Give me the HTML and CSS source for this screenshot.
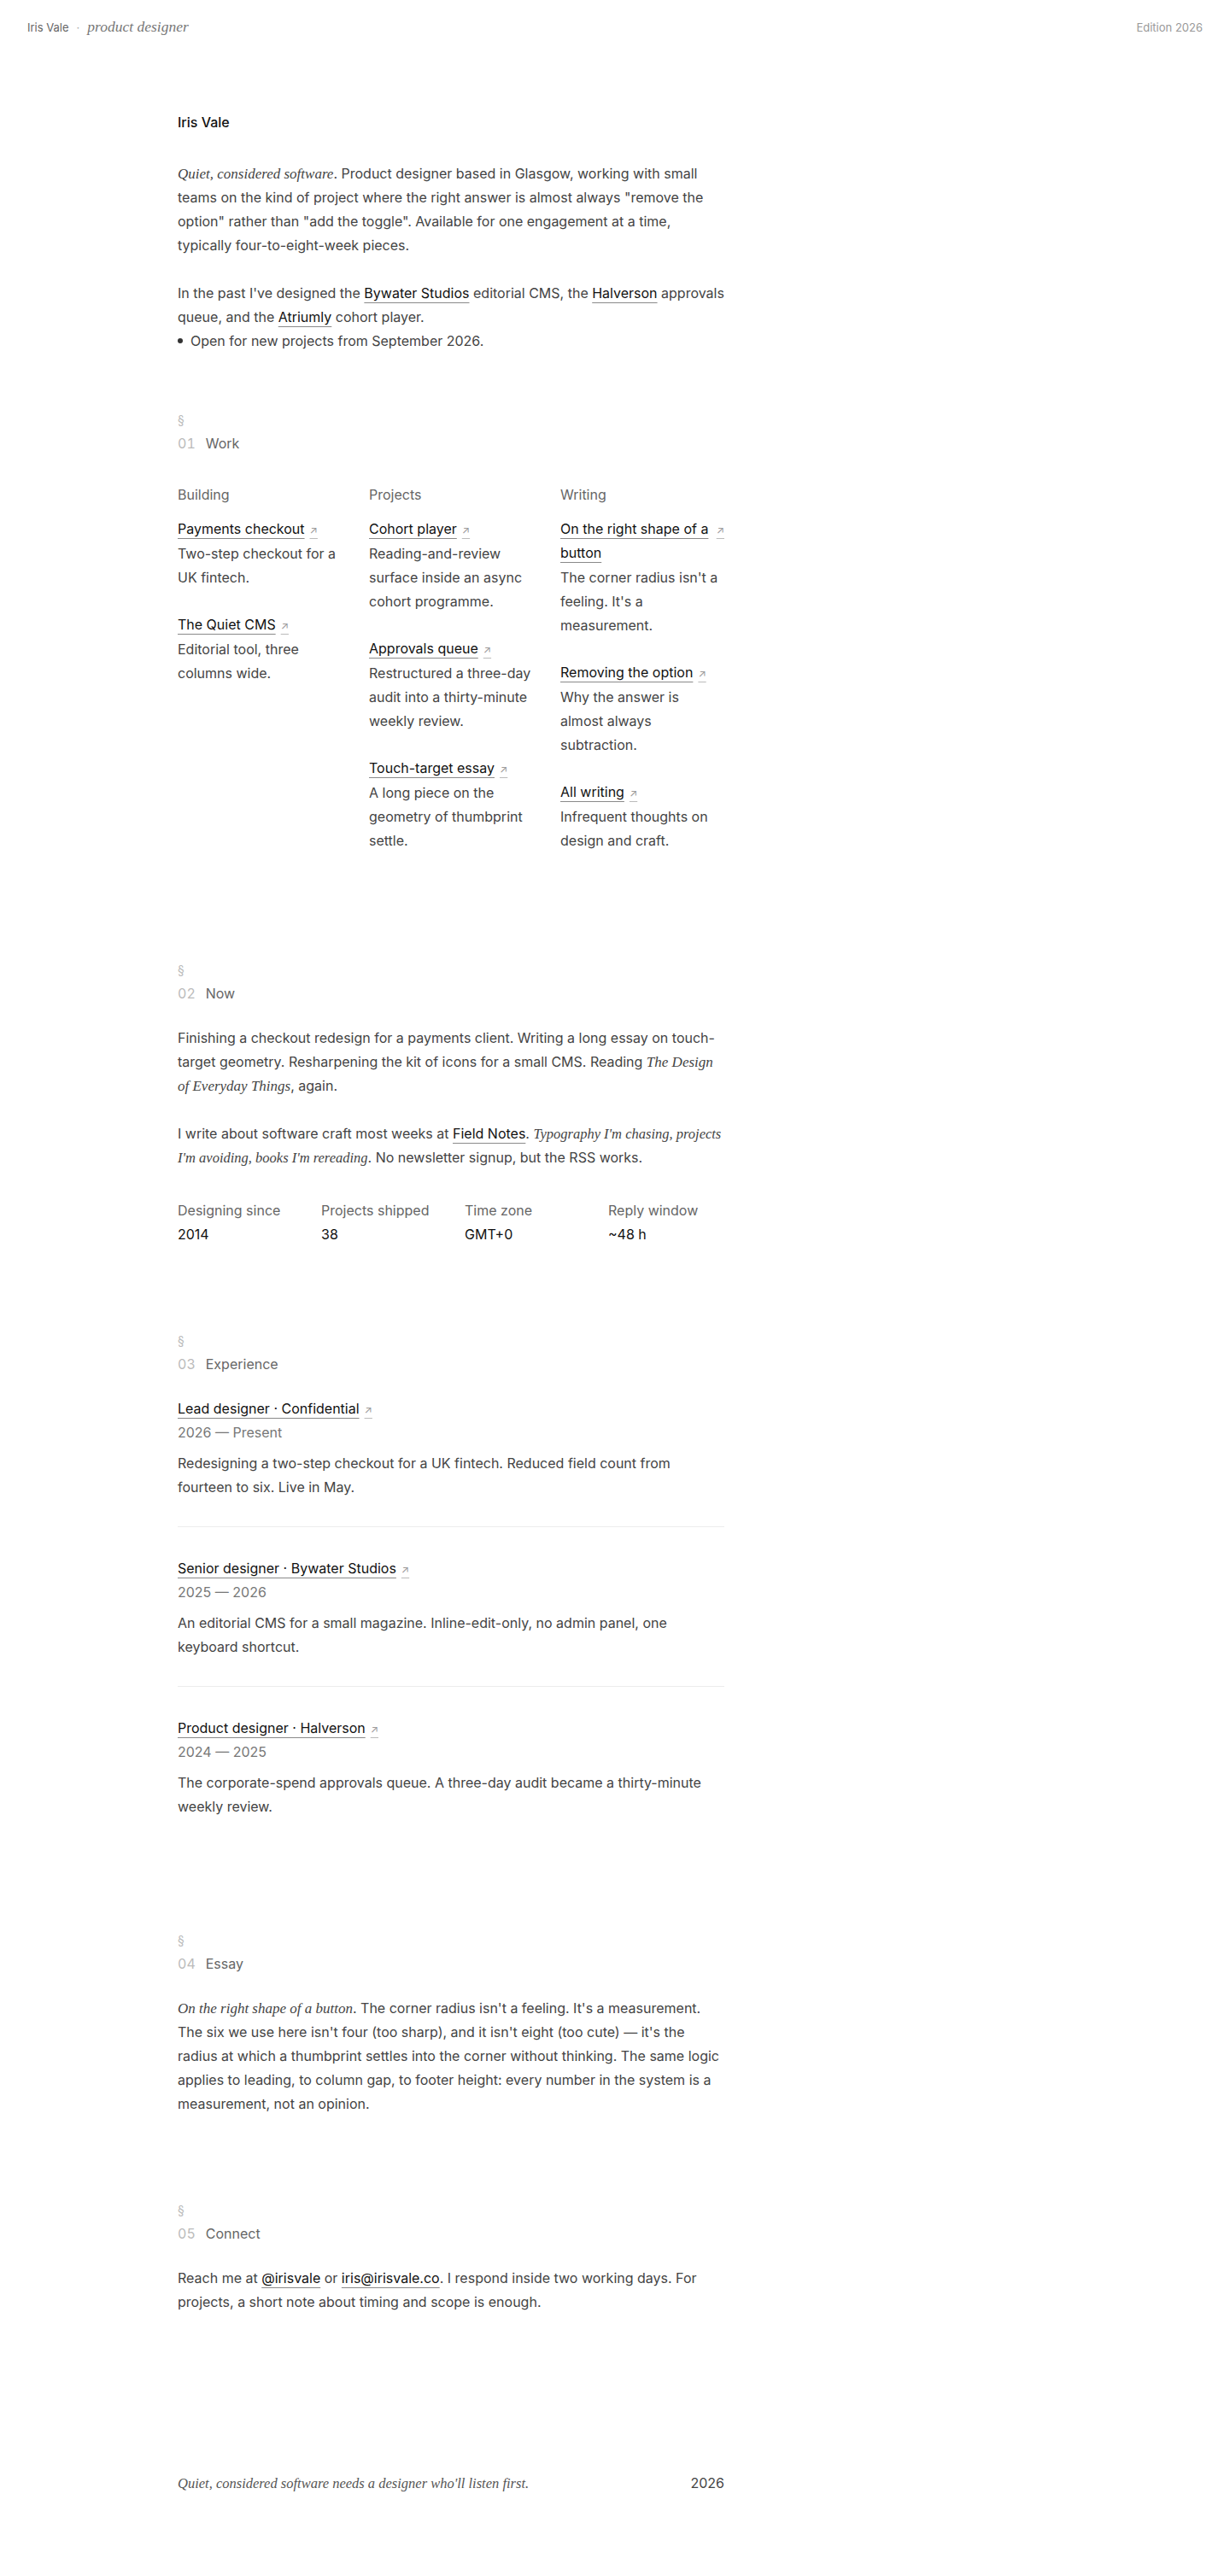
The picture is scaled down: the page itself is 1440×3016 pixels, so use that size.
FILE: index.html
```html
<!DOCTYPE html>
<html lang="en">
<head>
<meta charset="utf-8">
<title>Iris Vale · product designer</title>
<link rel="stylesheet" href="styles.css">
</head>
<body>
<header class="top">
  <div class="brand"><span class="brand-name">Iris Vale</span><span class="sep">·</span><em class="brand-role">product designer</em></div>
  <div class="edition">Edition 2026</div>
</header>

<main class="wrap">
  <div class="col">
    <section class="intro">
      <h1 class="name">Iris Vale</h1>
      <p class="para"><em class="s">Quiet, considered software</em>. Product designer based in Glasgow, working with small teams on the kind of project where the right answer is almost always "remove the option" rather than "add the toggle". Available for one engagement at a time, typically four-to-eight-week pieces.</p>
      <p class="para last">In the past I've designed the <a class="il" href="#">Bywater Studios</a> editorial CMS, the <a class="il" href="#">Halverson</a> approvals queue, and the <a class="il" href="#">Atriumly</a> cohort player.</p>
      <div class="status"><span class="dot"></span><span>Open for new projects from September 2026.</span></div>
    </section>

    <section class="sec first">
      <div class="sym">§</div>
      <h2 class="label"><span class="num">01</span><span>Work</span></h2>
      <div class="grid">
        <div class="wcol">
          <h3 class="wh">Building</h3>
          <div class="item">
            <a class="lk" href="#"><span class="lt">Payments checkout</span><span class="ar">↗</span></a>
            <p class="desc">Two-step checkout for a UK fintech.</p>
          </div>
          <div class="item">
            <a class="lk" href="#"><span class="lt">The Quiet CMS</span><span class="ar">↗</span></a>
            <p class="desc">Editorial tool, three columns wide.</p>
          </div>
        </div>
        <div class="wcol">
          <h3 class="wh">Projects</h3>
          <div class="item">
            <a class="lk" href="#"><span class="lt">Cohort player</span><span class="ar">↗</span></a>
            <p class="desc">Reading-and-review surface inside an async cohort programme.</p>
          </div>
          <div class="item">
            <a class="lk" href="#"><span class="lt">Approvals queue</span><span class="ar">↗</span></a>
            <p class="desc">Restructured a three-day audit into a thirty-minute weekly review.</p>
          </div>
          <div class="item">
            <a class="lk" href="#"><span class="lt">Touch-target essay</span><span class="ar">↗</span></a>
            <p class="desc">A long piece on the geometry of thumbprint settle.</p>
          </div>
        </div>
        <div class="wcol">
          <h3 class="wh">Writing</h3>
          <div class="item">
            <a class="lk" href="#"><span class="lt">On the right shape of a button</span><span class="ar">↗</span></a>
            <p class="desc">The corner radius isn't a feeling. It's a measurement.</p>
          </div>
          <div class="item">
            <a class="lk" href="#"><span class="lt">Removing the option</span><span class="ar">↗</span></a>
            <p class="desc">Why the answer is almost always subtraction.</p>
          </div>
          <div class="item">
            <a class="lk" href="#"><span class="lt">All writing</span><span class="ar">↗</span></a>
            <p class="desc">Infrequent thoughts on design and craft.</p>
          </div>
        </div>
      </div>
    </section>

    <section class="sec">
      <div class="sym">§</div>
      <h2 class="label"><span class="num">02</span><span>Now</span></h2>
      <p class="para">Finishing a checkout redesign for a payments client. Writing a long essay on touch-target geometry. Resharpening the kit of icons for a small CMS. Reading <em class="s">The Design of Everyday Things</em>, again.</p>
      <p class="para last">I write about software craft most weeks at <a class="il" href="#">Field Notes</a>. <em class="s tight">Typography I'm chasing, projects I'm avoiding, books I'm rereading</em>. No newsletter signup, but the RSS works.</p>
      <div class="stats">
        <div class="stat"><div class="st-l">Designing since</div><div class="st-v">2014</div></div>
        <div class="stat"><div class="st-l">Projects shipped</div><div class="st-v">38</div></div>
        <div class="stat"><div class="st-l">Time zone</div><div class="st-v">GMT+0</div></div>
        <div class="stat"><div class="st-l">Reply window</div><div class="st-v">~48 h</div></div>
      </div>
    </section>

    <section class="sec">
      <div class="sym">§</div>
      <h2 class="label"><span class="num">03</span><span>Experience</span></h2>
      <div class="entries">
        <div class="entry">
          <a class="lk" href="#"><span class="lt">Lead designer · Confidential</span><span class="ar">↗</span></a>
          <div class="date">2026 — Present</div>
          <p class="edesc">Redesigning a two-step checkout for a UK fintech. Reduced field count from fourteen to six. Live in May.</p>
        </div>
        <div class="entry">
          <a class="lk" href="#"><span class="lt">Senior designer · Bywater Studios</span><span class="ar">↗</span></a>
          <div class="date">2025 — 2026</div>
          <p class="edesc">An editorial CMS for a small magazine. Inline-edit-only, no admin panel, one keyboard shortcut.</p>
        </div>
        <div class="entry">
          <a class="lk" href="#"><span class="lt">Product designer · Halverson</span><span class="ar">↗</span></a>
          <div class="date">2024 — 2025</div>
          <p class="edesc">The corporate-spend approvals queue. A three-day audit became a thirty-minute weekly review.</p>
        </div>
      </div>
    </section>

    <section class="sec">
      <div class="sym">§</div>
      <h2 class="label"><span class="num">04</span><span>Essay</span></h2>
      <p class="para last"><em class="s">On the right shape of a button</em>. The corner radius isn't a feeling. It's a measurement. The six we use here isn't four (too sharp), and it isn't eight (too cute) — it's the radius at which a thumbprint settles into the corner without thinking. The same logic applies to leading, to column gap, to footer height: every number in the system is a measurement, not an opinion.</p>
    </section>

    <section class="sec">
      <div class="sym">§</div>
      <h2 class="label"><span class="num">05</span><span>Connect</span></h2>
      <p class="para last">Reach me at <a class="il" href="#">@irisvale</a> or <a class="il" href="#">iris@irisvale.co</a>. I respond inside two working days. For projects, a short note about timing and scope is enough.</p>
    </section>

    <footer class="foot">
      <em class="s tight foot-q">Quiet, considered software needs a designer who'll listen first.</em>
      <span class="yr">2026</span>
    </footer>
  </div>
</main>
</body>
</html>
```

FILE: styles.css
```css
* { box-sizing: border-box; }

body {
  margin: 0;
  background: #ffffff;
  color: #444444;
  font-family: Inter, "Noto Sans", "Liberation Sans", sans-serif;
  font-size: 16px;
  line-height: 28px;
}

em.s {
  font-family: "Liberation Serif", "DejaVu Serif", serif;
  font-style: italic;
  font-size: 17px;
  line-height: 1;
}
em.s.tight { font-size: 16.5px; }

/* header */
.top {
  display: flex;
  justify-content: space-between;
  align-items: baseline;
  padding: 17px 32px 0;
  height: 45px;
}
.brand { display: flex; align-items: baseline; }
.brand-name { font-size: 13px; color: #666666; }
.sep { font-size: 13px; color: #aaaaaa; margin: 0 9px; }
.brand-role {
  font-family: "Liberation Serif", "DejaVu Serif", serif;
  font-style: italic;
  font-size: 17.5px;
  color: #777777;
}
.edition { font-size: 13px; color: #999999; }

/* layout */
.wrap {
  max-width: 1024px;
  margin: 0 auto;
  padding-top: 84px;
}
.col { max-width: 640px; }

.name {
  margin: 0 0 32px;
  font-size: 16px;
  line-height: 28px;
  font-weight: 500;
  color: #111111;
}

.para { margin: 0 0 28px; }
.para.last { margin-bottom: 0; }

.il {
  color: #111111;
  text-decoration: underline;
  text-decoration-color: #8a8a8a;
  text-decoration-thickness: 1px;
  text-underline-offset: 5px;
}

.status { display: flex; align-items: center; }
.dot {
  width: 6px;
  height: 6px;
  border-radius: 50%;
  background: #333333;
  margin-right: 9px;
}

/* sections */
.sec { margin-top: 98px; }
.sec.first { margin-top: 66px; }
.sym { font-size: 14px; line-height: 26px; color: #bbbbbb; }
.label {
  display: flex;
  gap: 12px;
  margin: 0 0 24px;
  font-size: 16px;
  line-height: 28px;
  font-weight: 400;
  color: #666666;
}
.num { color: #bbbbbb; font-variant-numeric: tabular-nums; }

/* work grid */
.grid {
  display: grid;
  grid-template-columns: repeat(3, 192px);
  column-gap: 32px;
  align-items: start;
  padding-top: 8px;
}
.wh {
  margin: 0 0 12px;
  font-size: 16px;
  line-height: 28px;
  font-weight: 400;
  color: #666666;
}
.item { margin-bottom: 27px; }

.lk {
  display: flex;
  align-items: baseline;
  gap: 6px;
  color: #111111;
  text-decoration: none;
  line-height: 28px;
}
.lt {
  text-decoration: underline;
  text-decoration-color: #8a8a8a;
  text-decoration-thickness: 1px;
  text-underline-offset: 5px;
}
.ar {
  flex: none;
  font-size: 12px;
  line-height: 12px;
  color: #999999;
  text-decoration: underline;
  text-decoration-color: #bbbbbb;
  text-decoration-thickness: 1px;
  text-underline-offset: 5px;
}
.desc { margin: 1px 0 0; }

/* stats */
.stats {
  display: grid;
  grid-template-columns: repeat(4, 1fr);
  column-gap: 32px;
  margin-top: 34px;
}
.st-l { color: #666666; }
.st-v { color: #111111; }

/* experience */
.entry {
  padding: 34px 0 32px;
  border-bottom: 1px solid #ececec;
}
.entry:first-child { padding-top: 0; }
.entry:last-child { border-bottom: none; padding-bottom: 32px; }
.date { color: #777777; margin-bottom: 8px; }
.edesc { margin: 0; }

/* footer */
.foot {
  display: flex;
  justify-content: space-between;
  align-items: baseline;
  margin-top: 184px;
  padding-bottom: 60px;
}
.foot-q { color: #555555; }
.yr { color: #444444; }
```
